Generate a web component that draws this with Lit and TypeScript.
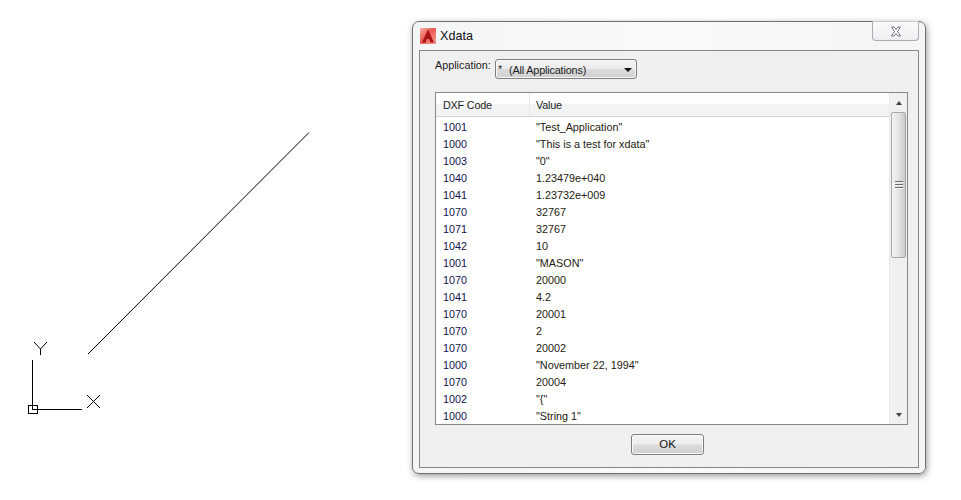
import { LitElement, html, css, svg } from "lit";
import { customElement } from "lit/decorators.js";

const ROWS: [string, string][] = [
  ["1001", '"Test_Application"'],
  ["1000", '"This is a test for xdata"'],
  ["1003", '"0"'],
  ["1040", "1.23479e+040"],
  ["1041", "1.23732e+009"],
  ["1070", "32767"],
  ["1071", "32767"],
  ["1042", "10"],
  ["1001", '"MASON"'],
  ["1070", "20000"],
  ["1041", "4.2"],
  ["1070", "20001"],
  ["1070", "2"],
  ["1070", "20002"],
  ["1000", '"November 22, 1994"'],
  ["1070", "20004"],
  ["1002", '"{"'],
  ["1000", '"String 1"'],
];

@customElement("app-root")
export class AppRoot extends LitElement {
  static styles = css`
    :host {
      display: block;
      position: relative;
      width: 961px;
      height: 500px;
      background: #fff;
      overflow: hidden;
      font-family: "Liberation Sans", Arial, sans-serif;
      font-size: 10.8px;
      color: #1c1c1c;
    }
    .canvas {
      position: absolute;
      left: 0;
      top: 0;
    }
    .window {
      position: absolute;
      left: 412px;
      top: 21px;
      width: 514px;
      height: 453px;
      box-sizing: border-box;
      display: flex;
      flex-direction: column;
      padding: 0 6px 6px;
      background: linear-gradient(90deg, #f4f5f5, #f8f9f9 50%, #f4f5f5);
      border: 1px solid #6f7072;
      border-radius: 7px;
      box-shadow: 1px 2px 6px rgba(0, 0, 0, 0.4);
    }
    .title {
      height: 28px;
      flex: none;
      display: flex;
      align-items: center;
      gap: 4px;
      padding-left: 1px;
      font-size: 12.6px;
      color: #111;
    }
    .close {
      position: absolute;
      right: 6px;
      top: -1px;
      width: 47px;
      height: 20px;
      box-sizing: border-box;
      border: 1px solid #a8abb0;
      border-top-color: #c8cace;
      border-radius: 0 0 4px 4px;
      background: linear-gradient(#fafafa, #eef0f2);
      display: flex;
      align-items: center;
      justify-content: center;
    }
    .client {
      flex: 1;
      box-sizing: border-box;
      background: #f0f0f0;
      border: 1px solid #84878b;
      padding: 8px 10px 12px 15px;
      display: flex;
      flex-direction: column;
    }
    .app-row {
      display: flex;
      height: 20px;
      flex: none;
      margin-bottom: 13px;
    }
    .app-label {
      width: 60px;
      flex: none;
      line-height: 13px;
    }
    .combo {
      width: 142px;
      box-sizing: border-box;
      border: 1px solid #7b7e82;
      border-radius: 3px;
      background: linear-gradient(#f4f4f4 0, #ececec 48%, #dcdcdc 52%, #cfcfcf 100%);
      box-shadow: inset 0 0 0 1px #f8f8f8;
      display: flex;
      align-items: center;
      padding: 1px 3px 0 2px;
    }
    .combo .star {
      width: 11px;
      flex: none;
      line-height: 12px;
      align-self: flex-start;
      margin-top: 2px;
    }
    .combo .val {
      flex: 1;
      letter-spacing: -0.15px;
    }
    .arrow-d {
      width: 0;
      height: 0;
      margin-right: 1px;
      border-left: 4px solid transparent;
      border-right: 4px solid transparent;
      border-top: 4px solid #111;
    }
    .list {
      width: 473px;
      height: 333px;
      flex: none;
      box-sizing: border-box;
      border: 1px solid #84878b;
      background: #fff;
      display: flex;
      overflow: hidden;
    }
    .table {
      flex: 1;
      min-width: 0;
      display: flex;
      flex-direction: column;
    }
    .head {
      height: 24px;
      flex: none;
      box-sizing: border-box;
      display: grid;
      grid-template-columns: 93px 1fr;
      background: linear-gradient(#ffffff 0, #ffffff 45%, #f1f3f5 50%, #f1f3f5 100%);
      border-bottom: 1px solid #d5d5d5;
      align-items: stretch;
      letter-spacing: -0.2px;
    }
    .head div {
      padding-left: 7px;
      line-height: 25px;
    }
    .head div + div {
      border-left: 1px solid #e3e5e7;
      padding-left: 6px;
    }
    .rows {
      display: flex;
      flex-direction: column;
      padding-top: 2px;
    }
    .row {
      height: 17px;
      line-height: 17px;
      display: grid;
      grid-template-columns: 93px 1fr;
      padding-left: 7px;
      white-space: nowrap;
    }
    .row .code {
      color: #121250;
    }
    .row .value {
      color: #241a10;
    }
    .scroll {
      width: 18px;
      flex: none;
      box-sizing: border-box;
      background: #f0f0f0;
      border-left: 1px solid #e8e8e8;
      display: flex;
      flex-direction: column;
      align-items: center;
    }
    .sbtn {
      height: 19px;
      flex: none;
      display: flex;
      align-items: center;
      justify-content: center;
    }
    .arrow-u {
      width: 0;
      height: 0;
      border-left: 3.5px solid transparent;
      border-right: 3.5px solid transparent;
      border-bottom: 4px solid #444;
    }
    .arrow-s {
      width: 0;
      height: 0;
      border-left: 3.5px solid transparent;
      border-right: 3.5px solid transparent;
      border-top: 4px solid #444;
    }
    .thumb {
      width: 15px;
      height: 146px;
      flex: none;
      box-sizing: border-box;
      border: 1px solid #a8a8a8;
      border-radius: 2px;
      background: linear-gradient(90deg, #f3f3f3, #e4e4e4 50%, #c9c9c9);
      display: flex;
      flex-direction: column;
      align-items: center;
      justify-content: center;
      gap: 1px;
    }
    .thumb i {
      display: block;
      width: 8px;
      height: 2px;
      background: linear-gradient(#6a6a6a 50%, #f6f6f6 50%);
    }
    .spacer {
      flex: 1;
    }
    .footer {
      display: flex;
      justify-content: flex-end;
      margin-top: 9px;
      padding-right: 204px;
    }
    .ok {
      width: 73px;
      height: 21px;
      box-sizing: border-box;
      border: 1px solid #7b7e82;
      border-radius: 3px;
      background: linear-gradient(#f4f4f4 0, #ececec 48%, #dcdcdc 52%, #cfcfcf 100%);
      box-shadow: inset 0 0 0 1px #f8f8f8;
      text-align: center;
      line-height: 19px;
      font-size: 11.5px;
      color: #111;
    }
  `;

  render() {
    return html`
      <svg class="canvas" width="961" height="500" viewBox="0 0 961 500">
        ${svg`
          <g fill="none" stroke="#000" stroke-width="1">
            <line x1="88" y1="354" x2="309" y2="132.5" />
            <line x1="32.5" y1="360" x2="32.5" y2="409" />
            <line x1="32" y1="409.5" x2="82" y2="409.5" />
            <rect x="28.5" y="405.5" width="9" height="8" />
            <line x1="87" y1="395" x2="100" y2="408" />
            <line x1="100" y1="395" x2="87" y2="408" />
            <polyline points="34,342 40.5,349 47,342" />
            <line x1="40.5" y1="349" x2="40.5" y2="355" />
          </g>
        `}
      </svg>
      <div class="window">
        <div class="title">
          <svg width="16" height="16" viewBox="0 0 16 16">
            <defs>
              <linearGradient id="ag" x1="0" y1="0" x2="1" y2="1">
                <stop offset="0" stop-color="#f7b0ac" />
                <stop offset="0.45" stop-color="#ec5a52" />
                <stop offset="1" stop-color="#f4a09a" />
              </linearGradient>
            </defs>
            <rect width="16" height="16" fill="url(#ag)" />
            <path d="M8 1.5 L2 14.5 L5.5 14.5 L6.8 11 L9.2 11 L10.5 14.5 L14 14.5 Z" fill="#a81512" />
          </svg>
          <span>Xdata</span>
        </div>
        <div class="close">
          <svg width="12" height="11" viewBox="0 0 12 11">
            <path d="M1.5 1 H4 L6 3.4 L8 1 H10.5 L7.5 5.5 L10.5 10 H8 L6 7.6 L4 10 H1.5 L4.5 5.5 Z" fill="#fff" stroke="#6d7480" stroke-width="1" />
          </svg>
        </div>
        <div class="client">
          <div class="app-row">
            <span class="app-label">Application:</span>
            <div class="combo">
              <span class="star">*</span>
              <span class="val">(All Applications)</span>
              <span class="arrow-d"></span>
            </div>
          </div>
          <div class="list">
            <div class="table">
              <div class="head"><div>DXF Code</div><div>Value</div></div>
              <div class="rows">
                ${ROWS.map(
                  ([c, v]) => html`<div class="row"><span class="code">${c}</span><span class="value">${v}</span></div>`
                )}
              </div>
            </div>
            <div class="scroll">
              <div class="sbtn"><span class="arrow-u"></span></div>
              <div class="thumb"><i></i><i></i><i></i></div>
              <div class="spacer"></div>
              <div class="sbtn"><span class="arrow-s"></span></div>
            </div>
          </div>
          <div class="footer"><div class="ok">OK</div></div>
        </div>
      </div>
    `;
  }
}
